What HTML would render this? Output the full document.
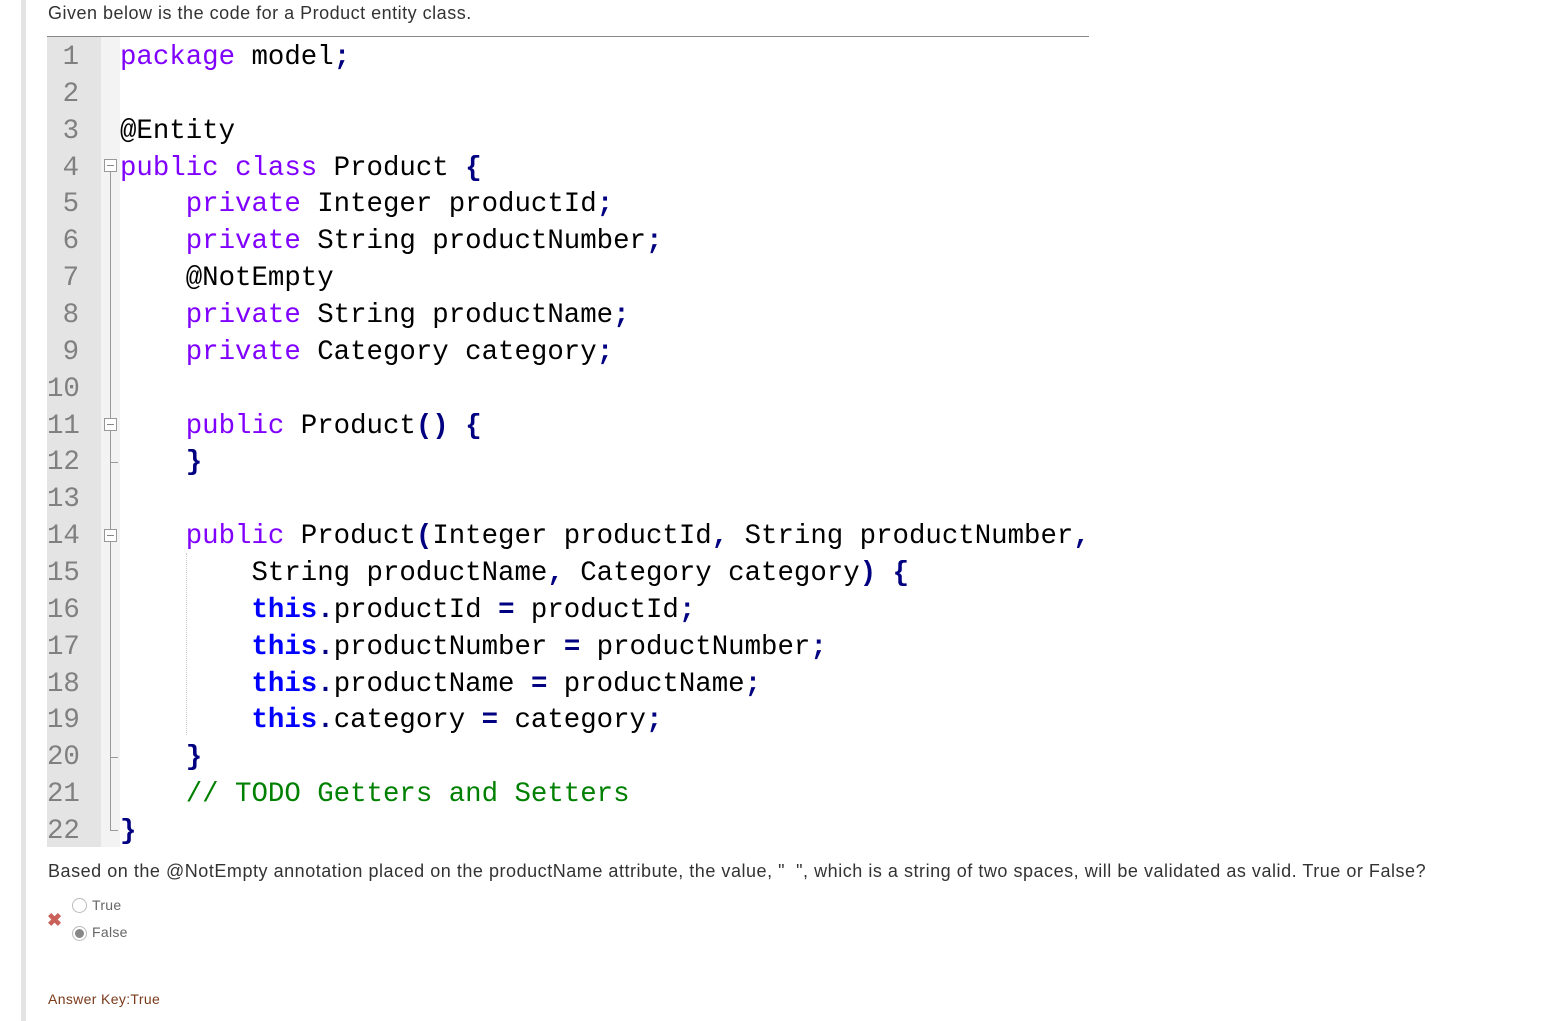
<!DOCTYPE html>
<html><head><meta charset="utf-8"><style>
body{margin:0;width:1542px;height:1021px;background:#fff;position:relative;overflow:hidden;font-family:"Liberation Sans",sans-serif}
.bar{position:absolute;left:21px;top:0;width:5px;height:1021px;background:#e3e3e3}
.t{position:absolute;left:48px;color:#333;white-space:nowrap}
.box{position:absolute;left:47px;top:36px;width:1042px;border-top:1px solid #888}
.gut{position:absolute;left:47px;top:37px;width:54px;height:810px;background:#e4e4e4}
.fold{position:absolute;left:101px;top:37px;width:19px;height:810px;background:#f3f3f3}
.ln,.code{position:absolute;top:40px;margin:0;font-family:"Liberation Mono",monospace;font-size:27.4px;line-height:36.86px}
.ln{left:47px;width:32px;text-align:right;color:#808080}
.code{left:120px;color:#000}
.k{color:#8000ff}.p{color:#000080;font-weight:bold}.b{color:#0000ff;font-weight:bold}.c{color:#008000}
.fb{position:absolute;left:104px;width:13px;height:13px;border:1px solid #999;background:#fff;box-sizing:border-box}
.fb:after{content:"";position:absolute;left:2px;right:2px;top:5px;height:1px;background:#888}
.vl{position:absolute;left:110px;width:1px;background:#999}
.hl{position:absolute;left:110px;width:8px;height:1px;background:#999}
.radio{position:absolute;left:72px;width:15px;height:15px;border:1px solid #bbb;border-radius:50%;box-sizing:border-box;background:#fff}
.radio.on:after{content:"";position:absolute;left:2px;top:2px;width:9px;height:9px;border-radius:50%;background:#888}
.rl{position:absolute;left:92px;font-size:14px;color:#666;letter-spacing:0.3px}
</style></head><body>
<div class="bar"></div>
<div class="t" style="top:3px;font-size:18px;letter-spacing:0.5px">Given below is the code for a Product entity class.</div>
<div class="box"></div>
<div class="gut"></div><div class="fold"></div>
<div class="vl" style="top:172px;height:658px"></div>
<div class="fb" style="top:159px"></div>
<div class="fb" style="top:418px"></div>
<div class="fb" style="top:529px"></div>
<div class="hl" style="top:462px"></div>
<div class="hl" style="top:757px"></div>
<div class="hl" style="top:830px"></div>
<div style="position:absolute;left:186px;top:553px;height:182px;border-left:1px dotted #ccc"></div>
<pre class="ln">1
2
3
4
5
6
7
8
9
10
11
12
13
14
15
16
17
18
19
20
21
22</pre>
<pre class="code"><span class="k">package</span> model<span class="p">;</span>

@Entity
<span class="k">public</span> <span class="k">class</span> Product <span class="p">{</span>
    <span class="k">private</span> Integer productId<span class="p">;</span>
    <span class="k">private</span> String productNumber<span class="p">;</span>
    @NotEmpty
    <span class="k">private</span> String productName<span class="p">;</span>
    <span class="k">private</span> Category category<span class="p">;</span>

    <span class="k">public</span> Product<span class="p">()</span> <span class="p">{</span>
    <span class="p">}</span>

    <span class="k">public</span> Product<span class="p">(</span>Integer productId<span class="p">,</span> String productNumber<span class="p">,</span>
        String productName<span class="p">,</span> Category category<span class="p">)</span> <span class="p">{</span>
        <span class="b">this</span><span class="p">.</span>productId <span class="p">=</span> productId<span class="p">;</span>
        <span class="b">this</span><span class="p">.</span>productNumber <span class="p">=</span> productNumber<span class="p">;</span>
        <span class="b">this</span><span class="p">.</span>productName <span class="p">=</span> productName<span class="p">;</span>
        <span class="b">this</span><span class="p">.</span>category <span class="p">=</span> category<span class="p">;</span>
    <span class="p">}</span>
    <span class="c">// TODO Getters and Setters</span>
<span class="p">}</span></pre>
<div class="t" style="top:861px;font-size:18px;letter-spacing:0.53px">Based on the @NotEmpty annotation placed on the productName attribute, the value, "&nbsp;&nbsp;", which is a string of two spaces, will be validated as valid. True or False?</div>
<div class="radio" style="top:898px"></div><div class="rl" style="top:897px">True</div>
<div class="radio on" style="top:926px"></div><div class="rl" style="top:924px">False</div>
<div style="position:absolute;left:47px;top:910px;color:#c9605a;font-size:18px;font-weight:bold">✖</div>
<div class="t" style="top:991px;font-size:14px;color:#7a3a1a;letter-spacing:0.35px">Answer Key:True</div>
</body></html>
